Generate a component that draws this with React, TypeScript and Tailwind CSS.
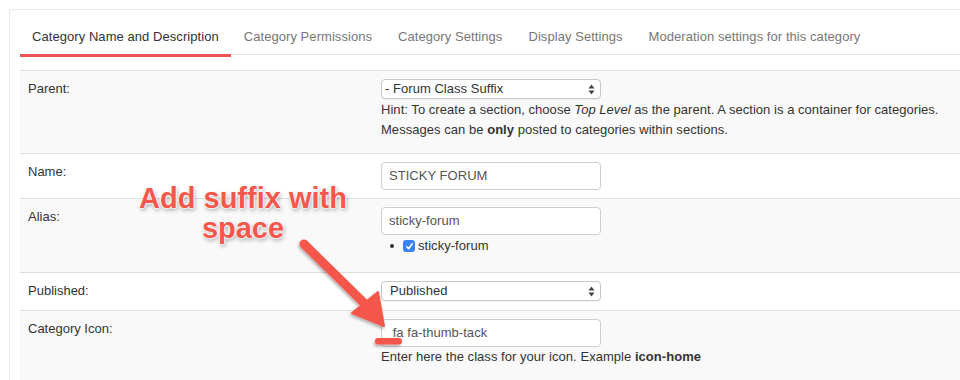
import React from "react";

const font = { fontFamily: '"Liberation Sans", Arial, Helvetica, sans-serif' };

function Arrows() {
  return (
    <svg width="7" height="11" viewBox="0 0 7 11" className="block">
      <path d="M3.5 0.5 L6.5 4.5 L0.5 4.5 Z" fill="#444" />
      <path d="M3.5 10.5 L6.5 6.5 L0.5 6.5 Z" fill="#444" />
    </svg>
  );
}

function FakeSelect({ text, padLeft }: { text: string; padLeft: string }) {
  return (
    <div
      className={`flex h-[20px] w-[220px] items-center justify-between rounded-[4px] border border-[#c8c8c8] bg-white pr-[5px] text-[13px] leading-[18px] text-[#333] shadow-[0_1px_1px_rgba(0,0,0,0.05)] ${padLeft}`}
    >
      <span>{text}</span>
      <Arrows />
    </div>
  );
}

function TextBox({ value }: { value: string }) {
  return (
    <div className="flex h-[28px] w-[220px] items-center rounded-[4px] border border-[#cfcfcf] bg-white pl-[7px] text-[13px] text-[#555] whitespace-pre">
      {value}
    </div>
  );
}

function Row({
  label,
  bg,
  h,
  children,
}: {
  label: string;
  bg: string;
  h: string;
  children: React.ReactNode;
}) {
  return (
    <div className={`flex border-t border-[#dddddd] ${bg} ${h}`}>
      <div className="w-[353px] shrink-0 px-2 pt-2 text-[13px] leading-[20px] text-[#333]">{label}</div>
      <div className="flex-1 px-2 pt-2 text-[13px] leading-[20px] text-[#333] tracking-[0.04px]">{children}</div>
    </div>
  );
}

export default function App() {
  const tabs = [
    "Category Permissions",
    "Category Settings",
    "Display Settings",
    "Moderation settings for this category",
  ];
  return (
    <div className="relative h-[380px] w-[960px] overflow-hidden bg-white" style={font}>
      <div className="ml-[9px] mt-[9px] w-[1000px] border-l border-t border-[#ececec] pl-[10px]">
        {/* Tabs */}
        <div className="flex h-[45px] border-b border-[#e6e6e6] text-[13px] leading-[20px] tracking-[0.06px]">
          <div className="mb-[-3px] h-[47px] border-b-[3px] border-[#ee5253] px-[12px] pt-[17px] text-[#333]">
            Category Name and Description
          </div>
          {tabs.map((t) => (
            <div key={t} className="h-[44px] px-[13px] pt-[17px] text-[#777]">
              {t}
            </div>
          ))}
        </div>

        {/* Table */}
        <div className="mt-[15px]">
          <Row label="Parent:" bg="bg-[#f9f9f9]" h="h-[83px]">
            <FakeSelect text="- Forum Class Suffix" padLeft="pl-[3px]" />
            <div className="mt-[1px]">
              Hint: To create a section, choose <i>Top Level</i> as the parent. A section is a container for categories.
            </div>
            <div>
              Messages can be <b>only</b> posted to categories within sections.
            </div>
          </Row>
          <Row label="Name:" bg="bg-white" h="h-[45px]">
            <TextBox value="STICKY FORUM" />
          </Row>
          <Row label="Alias:" bg="bg-[#f9f9f9]" h="h-[74px]">
            <TextBox value="sticky-forum" />
            <div className="mt-[1px] flex h-[20px] items-center pl-[9px]">
              <span className="mr-[9px] inline-block h-[4px] w-[4px] rounded-full bg-[#333]" />
              <span className="mr-[3px] flex h-[12px] w-[12px] items-center justify-center rounded-[3px] bg-[#3b82f6]">
                <svg width="9" height="9" viewBox="0 0 9 9">
                  <path d="M1.8 4.8 L3.6 6.8 L7.2 1.8" fill="none" stroke="white" strokeWidth="1.5" strokeLinecap="round" strokeLinejoin="round" />
                </svg>
              </span>
              <span>sticky-forum</span>
            </div>
          </Row>
          <Row label="Published:" bg="bg-white" h="h-[38px]">
            <FakeSelect text="Published" padLeft="pl-[8px]" />
          </Row>
          <Row label="Category Icon:" bg="bg-[#f9f9f9]" h="h-[80px]">
            <TextBox value=" fa fa-thumb-tack" />
            <div>
              Enter here the class for your icon. Example <b>icon-home</b>
            </div>
          </Row>
        </div>
      </div>

      {/* Annotation text */}
      <div
        className="absolute left-[110px] top-[183px] w-[266px] text-center text-[29px] font-bold leading-[30px] text-[#f4574b] [text-shadow:0_0_2px_#fff,0_0_2px_#fff,0_0_2px_#fff,0_0_2px_#fff,1px_2px_4px_rgba(0,0,0,0.4)]"
      >
        Add suffix with
        <br />
        space
      </div>

      {/* Arrow + underline */}
      <svg className="pointer-events-none absolute left-0 top-0" width="960" height="380" viewBox="0 0 960 380">
        <defs>
          <filter id="sh" x="-20%" y="-20%" width="140%" height="140%">
            <feDropShadow dx="-1" dy="2" stdDeviation="1.5" floodColor="#000" floodOpacity="0.3" />
          </filter>
        </defs>
        <g filter="url(#sh)">
          <line x1="304" y1="244" x2="365" y2="304" stroke="#f4574b" strokeWidth="9" strokeLinecap="round" />
          <path d="M384 326 L352 313 L378 292 Z" fill="#f4574b" stroke="#f4574b" strokeWidth="2" strokeLinejoin="round" />
          <rect x="375" y="338" width="27" height="6.5" rx="3.25" fill="#f4574b" />
        </g>
      </svg>
    </div>
  );
}
